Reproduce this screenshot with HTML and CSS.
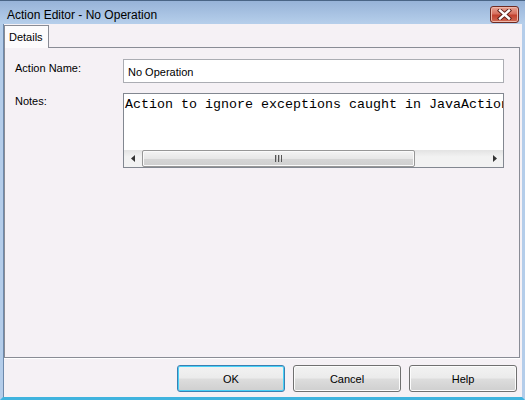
FILE: index.html
```html
<!DOCTYPE html>
<html lang="en">
<head>
  <meta charset="UTF-8" />
  <title>Action Editor - No Operation</title>
  <link rel="stylesheet" href="styles.css">
</head>
<body>
  <div class="window">
    <div class="titlebar">
      <span class="title">Action Editor - No Operation</span>
      <div class="close">
        <svg width="15" height="11" viewBox="0 0 15 11">
          <path d="M3 1.5 L12 9.5 M12 1.5 L3 9.5" stroke="#5a1e18" stroke-width="4.2" stroke-linecap="square" fill="none"/>
          <path d="M3 1.5 L12 9.5 M12 1.5 L3 9.5" stroke="#ffffff" stroke-width="2.4" stroke-linecap="square" fill="none"/>
        </svg>
      </div>
    </div>

    <div class="client">
      <div class="tabs">
        <div class="tab">Details</div>
      </div>

      <div class="panel">
        <div class="row">
          <div class="label">Action Name:</div>
          <div class="field">No Operation</div>
        </div>
        <div class="row notes-row">
          <div class="label">Notes:</div>
          <div class="notes">
            <div class="notes-text">Action to ignore exceptions caught in JavaActions</div>
            <div class="hscroll">
              <div class="arrow">
                <svg width="4" height="7" viewBox="0 0 4 7"><path d="M4 0 L0 3.5 L4 7 Z" fill="#333"/></svg>
              </div>
              <div class="track">
                <div class="thumb"><span class="grip"></span></div>
              </div>
              <div class="arrow">
                <svg width="4" height="7" viewBox="0 0 4 7"><path d="M0 0 L4 3.5 L0 7 Z" fill="#333"/></svg>
              </div>
            </div>
          </div>
        </div>
      </div>

      <div class="buttons">
        <div class="btn default">OK</div>
        <div class="btn">Cancel</div>
        <div class="btn">Help</div>
      </div>
    </div>
  </div>
</body>
</html>
```

FILE: styles.css
```css
body {
  margin: 0;
  padding: 0;
  background: #f5f1f5;
  font-family: Tahoma, 'Liberation Sans', sans-serif;
  font-size: 11px;
  color: #000;
}

.window {
  width: 525px;
  height: 400px;
  box-sizing: border-box;
  display: flex;
  flex-direction: column;
  background: #f5f1f5;
  border-left: 3px solid #b4cdea;
  border-right: 3px solid #b4cdea;
  border-bottom: 3px solid #3fb3de;
  box-shadow: inset 1px 0 0 #6d89ab;
}

.titlebar {
  height: 24px;
  margin: 0 -3px;
  padding: 0 6px 0 7px;
  display: flex;
  align-items: center;
  justify-content: space-between;
  background: linear-gradient(#97b3d8, #b6cfeb);
  border-top: 1px solid #4a6586;
  box-sizing: border-box;
}

.title {
  font-family: 'Liberation Sans', sans-serif;
  font-size: 12px;
  padding-top: 4px;
}

.close {
  width: 29px;
  height: 17px;
  margin-top: 4px;
  box-sizing: border-box;
  border: 1px solid #6e2a22;
  border-radius: 3px;
  background: linear-gradient(#e7a596 0%, #d7705f 45%, #c2412f 55%, #cf6b55 100%);
  box-shadow: inset 0 0 0 1px #efb8aa;
  display: flex;
  align-items: center;
  justify-content: center;
}

.client {
  flex: 1;
  display: flex;
  flex-direction: column;
  padding: 1px 0 0 1px;
}

.tabs {
  display: flex;
  height: 22px;
}

.tab {
  width: 45px;
  box-sizing: border-box;
  border: 1px solid #898c95;
  border-bottom: none;
  background: #fcfbfc;
  padding: 5px 0 0 4px;
  position: relative;
  z-index: 1;
  height: 23px;
}

.panel {
  width: 516px;
  height: 311px;
  box-sizing: border-box;
  border: 1px solid #898c95;
  box-shadow: 0 1px 0 #ffffff;
  padding: 11px 15px 0 10px;
  display: flex;
  flex-direction: column;
  gap: 10px;
}

.row {
  display: flex;
}

.label {
  width: 108px;
  padding-top: 3px;
}

.field {
  width: 381px;
  height: 24px;
  box-sizing: border-box;
  border: 1px solid #abadb3;
  background: #fff;
  padding: 6px 0 0 4px;
}

.notes-row .label {
  padding-top: 2px;
}

.notes {
  width: 381px;
  height: 75px;
  box-sizing: border-box;
  border: 1px solid #828790;
  background: #fff;
  display: flex;
  flex-direction: column;
  overflow: hidden;
}

.notes-text {
  flex: 1;
  font-family: 'Liberation Mono', monospace;
  font-size: 13.33px;
  line-height: 15px;
  padding: 3px 0 0 1px;
  white-space: nowrap;
}

.hscroll {
  height: 17px;
  display: flex;
  background: linear-gradient(#e3e3e3, #f2f2f2 40%, #f2f2f2);
}

.arrow {
  width: 17px;
  display: flex;
  align-items: center;
  justify-content: center;
}

.track {
  flex: 1;
  padding: 0 71px 0 1px;
  display: flex;
}

.thumb {
  flex: 1;
  box-sizing: border-box;
  border: 1px solid #979797;
  border-radius: 2px;
  background: linear-gradient(#f4f4f4, #e7e7e7 50%, #d6d6d6 51%, #cfcfcf);
  box-shadow: inset 0 0 0 1px #fafafa;
  display: flex;
  align-items: center;
  justify-content: center;
}

.grip {
  width: 7px;
  height: 7px;
  background: repeating-linear-gradient(90deg, #555 0 1px, #bbb 1px 2px, transparent 2px 3px);
}

.buttons {
  flex: 1;
  display: flex;
  justify-content: flex-end;
  align-items: flex-start;
  gap: 8px;
  padding: 7px 5px 0 0;
}

.btn {
  width: 108px;
  height: 27px;
  box-sizing: border-box;
  border: 1px solid #707070;
  border-radius: 3px;
  background: linear-gradient(#f2f2f2 0%, #ebebeb 48%, #dddddd 52%, #cfcfcf 100%);
  box-shadow: inset 0 0 0 1px #fcfcfc;
  display: flex;
  align-items: center;
  justify-content: center;
}

.btn.default {
  border-color: #3c7fb1;
  box-shadow: inset 0 0 0 1px #48d1f8;
}
```
